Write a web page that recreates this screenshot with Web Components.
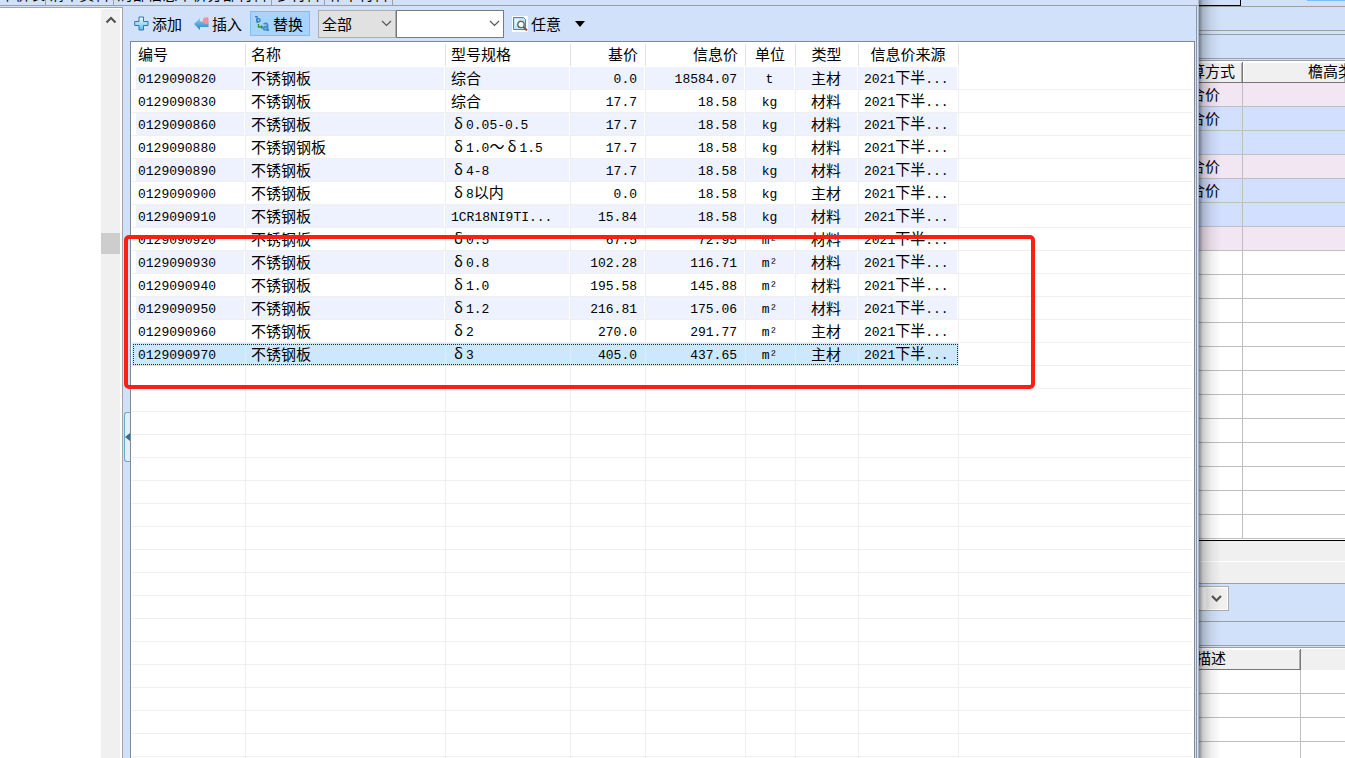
<!DOCTYPE html>
<html lang="zh-CN">
<head>
<meta charset="utf-8">
<title>人材机查询</title>
<style>
html,body{margin:0;height:100%;overflow:hidden}
body{font:15px/20px "Noto Sans CJK SC",sans-serif;color:#000;background:#d2e1fa}
</style>
</head>
<body>
<price-app></price-app>
<script>
const define=(name,html,init)=>{
  const t=document.createElement('template');
  t.innerHTML=html;
  customElements.define(name,class extends HTMLElement{
    constructor(){
      super();
      this.attachShadow({mode:'open'}).append(t.content.cloneNode(true));
      this.ready=false;
    }
    connectedCallback(){
      if(this.ready)return;
      this.ready=true;
      if(init)init(this,this.shadowRoot);
    }
  });
};

/* Half-width runs are set in the monospaced face, the rest in the CJK face. */
const runs=s=>s.replace(/([\x20-\x7e²]+)|(δ)/g,(m,a,w)=>w?`<span class="w">${w}</span>`:`<span class="n">${a}</span>`);

define('page-tabs',`
<style>
:host{display:flex;height:5px;overflow:hidden;border-bottom:1px solid #9c9fa5}
a{box-sizing:border-box;height:5px;border-right:1px solid #9c9fa5;color:inherit;text-decoration:none;white-space:nowrap;overflow:hidden;display:flex;align-items:flex-end;justify-content:center;line-height:22px}
a:nth-of-type(1){width:46px}a:nth-of-type(2){width:68px}a:nth-of-type(3){width:158px}a:nth-of-type(4){width:53px}a:nth-of-type(5){width:68px}
</style>
<a href="#">单价表</a><a href="#">清单资料</a><a href="#">局部信息单价分部材料</a><a href="#">参材料</a><a href="#">补中材料</a>`);

define('tree-panel',`
<style>
:host{box-sizing:border-box;display:flex;justify-content:flex-end;flex:0 0 123px;margin-top:1px;background:#fff;border:solid #a0a3a8;border-width:1px 1px 0 0;padding-right:2px}
.bar{width:19px;background:#f0f0f0;display:flex;flex-direction:column;align-items:center;margin-top:1px}
svg{margin-top:7px;flex:none}
.thumb{width:19px;height:21px;background:#cdcdcd;margin-top:209px}
</style>
<div class="bar"><svg width="12" height="8" viewBox="0 0 12 8"><path d="M1.5 6.5 6 2l4.500 4.500" fill="none" stroke="#505050" stroke-width="2"/></svg><div class="thumb"></div></div>`);

define('panel-splitter',`
<style>
:host{display:flex;flex:0 0 7px;justify-content:flex-end;align-items:flex-start}
button{box-sizing:border-box;width:6px;height:50px;margin-top:406px;padding:0;border:1px solid #6ea6c8;border-right:0;border-radius:3px 0 0 3px;background:#e0effa;display:flex;align-items:center;justify-content:flex-end}
</style>
<button aria-label="收起"><svg width="5" height="8" viewBox="0 0 5 8"><path d="M5 0v8L0 4z" fill="#39718f"/></svg></button>`);

define('tool-button',`
<style>
:host{display:block}
button{box-sizing:border-box;display:flex;align-items:center;gap:3px;height:25px;padding:0 3px;border:1px solid transparent;background:none;font:inherit;color:inherit;white-space:nowrap}
:host([active]) button{background:#a8d3fd;border-color:#7fbdf5;padding:0 6px 0 4px}
</style>
<button><slot name="icon"></slot><slot></slot><slot name="end"></slot></button>`);

define('drop-box',`
<style>
:host{display:grid;height:28px}
select,svg{grid-area:1/1}
select{box-sizing:border-box;width:100%;height:28px;margin:0;padding:0 20px 0 3px;appearance:none;border:1px solid #acacac;border-radius:0;background:#e1e1e1;font:inherit;color:inherit}
:host([plain]) select{background:#fff;border-color:#7a7a7a}
svg{justify-self:end;align-self:center;margin-right:4px;pointer-events:none}
</style>
<select><option></option></select><svg width="11" height="7" viewBox="0 0 11 7"><path d="M1 1l4.500 4.500L10 1" fill="none" stroke="#555" stroke-width="1.200"/></svg>`,
(el,r)=>{const s=r.querySelector('select');s.setAttribute('aria-label',el.getAttribute('label'));s.options[0].textContent=el.getAttribute('value')||''});

define('tool-bar',`
<style>
:host{display:flex;align-items:center;height:35px}
.all{width:78px;margin-left:8px}.find{width:108px;margin-right:4px}
.ins{margin:0 4px}
svg{display:block;flex:none}
.end{margin-left:11px}
</style>
<tool-button><svg slot="icon" width="15" height="15" viewBox="0 0 15 15"><defs><linearGradient id="p" x2="0" y2="1"><stop stop-color="#f2fbff"/><stop offset="1" stop-color="#5dbdea"/></linearGradient></defs><path d="M5 1h4.500v4.500H14V9.500H9.500V14H5V9.500H.7V5.500H5z" fill="url(#p)" stroke="#2f78a8" stroke-linejoin="round"/></svg>添加</tool-button>
<tool-button class="ins"><svg slot="icon" width="15" height="15" viewBox="0 0 15 15"><defs><linearGradient id="q" x2="0" y2="1"><stop stop-color="#8fd0f5"/><stop offset="1" stop-color="#2b7fc4"/></linearGradient></defs><path d="M0 8l6-6v3.500h8.500v5.500H6v3z" fill="url(#q)"/><path d="M9 2.500q3-2 5.500-1V7L12 8.500 9 6z" fill="#f3929c"/></svg>插入</tool-button>
<tool-button active><svg slot="icon" width="15" height="17" viewBox="0 0 15 17"><g fill="none" stroke="#2d7fc2" stroke-width="1.300"><path d="M0 1.600h2V7h1"/><circle cx="3.500" cy="5.300" r="1.600"/></g><path d="M3.500 9v3h3" fill="none" stroke="#2f9638" stroke-width="1.400"/><path d="M6 9.800l2.500 2.200L6 14z" fill="#2f9638"/><path d="M8.500 9q3.500-1.500 4 .8V15h1.500M12.500 11.500q-4 0-4 2t4 .7" fill="none" stroke="#3b8cc9" stroke-width="1.800"/></svg>替换</tool-button>
<drop-box class="all" label="范围" value="全部"></drop-box><drop-box class="find" plain label="关键字"></drop-box>
<tool-button><svg slot="icon" width="16" height="16" viewBox="0 0 16 16"><path d="M0 0h16v16H0z" fill="#fff"/><path d="M1.500 1.500h10l2 2v10h-12z" fill="#c5e5f5" stroke="#4b86ab"/><path d="M3 3h4L3 11z" fill="#eef9ff"/><circle cx="9" cy="8.500" r="3.200" fill="#fff" stroke="#695e55" stroke-width="1.300"/><path d="M11.500 11l3.500 3.500" stroke="#7b5b40" stroke-width="2"/></svg>任意<svg slot="end" class="end" width="10" height="6" viewBox="0 0 10 6"><path d="M0 0h10L5 6z"/></svg></tool-button>`);

define('material-table',`
<style>
:host{display:block;flex:1;min-height:0;overflow:hidden;padding:0 2px 0 1px;border:solid #818896;border-width:1px 1px 0;background:repeating-linear-gradient(#fff 0 22px,#efefef 22px 23px) 0 25px no-repeat content-box,#fff}
.n{font:13px/20px "Liberation Mono",monospace}
.w{display:inline-block;width:15px;text-align:center;line-height:20px}
table{table-layout:fixed;width:827px;height:100%;border-collapse:separate;border-spacing:0}
th,td{box-sizing:border-box;padding:0 8px 0 5px;text-align:left;white-space:nowrap;overflow:hidden;line-height:20px}
th{height:25px;padding-bottom:2px;font-weight:400;background:linear-gradient(#e2e2e2,#e2e2e2) 100% 2px/1px 22px no-repeat #fff}
td{height:23px;border-right:1px solid #efefef;background-clip:padding-box;background-repeat:no-repeat}
th:first-child,td:first-child{padding-left:6px}
.r{text-align:right}.c{text-align:center;padding-left:1px;padding-right:3px}
td.cjk{padding-bottom:2px}
tr.odd td{background-image:linear-gradient(#eef2fe,#eef2fe);background-size:calc(100% - 1px) 22px}
tr.odd td:first-child{background-position:4px 0;background-size:calc(100% - 5px) 22px}
tr.sel td{background:#cce8ff;border-color:#dcecf8}
tr.sel{outline:1px dotted #402010;outline-offset:-2px}
tr.rest td{height:auto}
</style>
<table><colgroup><col style="width:114px"><col style="width:200px"><col style="width:125px"><col style="width:75px"><col style="width:100px"><col style="width:50px"><col style="width:63px"><col style="width:100px"></colgroup>
<thead><tr><th>编号</th><th>名称</th><th>型号规格</th><th class="r">基价</th><th class="r">信息价</th><th class="c">单位</th><th class="c">类型</th><th class="c">信息价来源</th></tr></thead><tbody></tbody></table>`,
(el,r)=>{
  const data=[['820','不锈钢板','综合','0.0','18584.07','t','主材'],['830','不锈钢板','综合','17.7','18.58','kg','材料'],['860','不锈钢板','δ0.05-0.5','17.7','18.58','kg','材料'],['880','不锈钢钢板','δ1.0～δ1.5','17.7','18.58','kg','材料'],['890','不锈钢板','δ4-8','17.7','18.58','kg','材料'],['900','不锈钢板','δ8以内','0.0','18.58','kg','主材'],['910','不锈钢板','1CR18NI9TI...','15.84','18.58','kg','材料'],['920','不锈钢板','δ0.5','67.5','72.95','m²','材料'],['930','不锈钢板','δ0.8','102.28','116.71','m²','材料'],['940','不锈钢板','δ1.0','195.58','145.88','m²','材料'],['950','不锈钢板','δ1.2','216.81','175.06','m²','材料'],['960','不锈钢板','δ2','270.0','291.77','m²','主材'],['970','不锈钢板','δ3','405.0','437.65','m²','主材']];
  const cls=['','','','r','r','c','c',''];
  r.querySelector('tbody').innerHTML=data.map((d,i)=>{
    const cells=['0129090'+d[0],...d.slice(1),'2021下半...'];
    return `<tr class="${i===12?'sel':i%2?'':'odd'}">${cells.map((c,k)=>`<td class="${cls[k]}${/^[\u4e00-\u9fff]+$/.test(c)?' cjk':''}">${runs(c)}</td>`).join('')}</tr>`;
  }).join('')+`<tr class="rest">${'<td></td>'.repeat(8)}</tr>`;
});

define('front-window',`
<style>
:host{display:flex;flex-direction:column;min-width:0;height:100%;background:#d2e1fa;box-sizing:border-box;position:relative;border-right:1px solid #a9b7cd}
.body{display:flex;flex:1;min-height:0}
main{flex:1;min-width:0;display:flex;flex-direction:column}
.edge{flex:none;width:1px;margin:0 1px;background:#8e96a3}
.mark{position:absolute;left:124px;top:235px;width:911px;height:154px;box-sizing:border-box;border:4px solid #ff1e14;border-radius:5px;pointer-events:none}
</style>
<page-tabs></page-tabs>
<div class="body"><tree-panel></tree-panel><panel-splitter></panel-splitter><main><tool-bar></tool-bar><material-table></material-table></main><div class="edge"></div></div>
<div class="mark"></div>`);

define('data-grid',`
<style>
:host{display:block;overflow:hidden;background:#fff}
table{table-layout:fixed;width:calc(100% + 9px);margin-left:-9px;border-collapse:separate;border-spacing:0}
th,td{box-sizing:border-box;padding:0 0 2px;text-align:left;font-weight:400;white-space:nowrap;overflow:hidden;line-height:20px}
th{height:21px;line-height:18px;background:#f0f0f0;border:solid #777;border-width:0 1px 1px 0;box-shadow:inset 1px 1px #fff,inset -1px 0 #b0b0b0}
td{height:24px;border:solid #bfbfbf;border-width:0 1px 1px 0}
td:last-child,th:last-child{border-right:0}
.pink td{background:#f2e6f2}.blue td{background:#d3dfff}
.far{padding-left:65px}
.desc{padding-left:6px}
.blank{border-color:#f0f0f0;box-shadow:none}
</style>
<table><thead></thead><tbody></tbody></table>`,
(el,r)=>{
  const lower=el.hasAttribute('lower');
  const w=lower?111:53;
  r.querySelector('thead').innerHTML=lower?`<tr><th class="desc" style="width:${w}px">描述</th><th class="blank"></th></tr>`:`<tr><th style="width:${w}px">算方式</th><th class="far">檐高类型</th></tr>`;
  const top=[['pink','合价'],['blue','合价'],['blue',''],['pink','合价'],['blue','合价'],['blue',''],['pink','']];
  r.querySelector('tbody').innerHTML=Array.from({length:lower?6:19},(_,i)=>{
    const [c,t]=(!lower&&top[i])||['',''];
    return `<tr class="${c}"><td>${t}</td><td></td></tr>`;
  }).join('');
});

define('back-window',`
<style>
:host{display:grid;height:100%;overflow:hidden;background:#d2e1fa}
.col,.shade{grid-area:1/1;min-width:0}
.col{display:flex;flex-direction:column;min-height:0}
.col>*{flex:none;box-sizing:border-box}
.shade{pointer-events:none;width:22px;background:linear-gradient(90deg,#0007,#0003 4px,#0001 12px,#0000)}
.top{height:7px;border-bottom:1px solid #a0a0a0;display:flex;justify-content:space-between}
.box{box-sizing:border-box;width:42px;height:6px;border:solid #000;border-width:0 1px 1px 0}
.tab{width:38px;height:1px;background:#7fbcf7}
.a{height:24px;border-bottom:1px solid #a0a0a0}
.b{height:4px;border-bottom:1px solid #a0a0a0}
.c{height:26px;border-bottom:3px double #9a9ea6}
.grid{border-top:1px solid #fff;border-bottom:1px solid #000;height:480px}
.g1{height:21px;background:#f0f0f0;border-bottom:1px solid #fff}
.g2{height:22px;background:#f0f0f0;border-bottom:1px solid #a0a0a0}
.d{height:38px;border-bottom:1px solid #9a9ea6;padding-top:2px}
.e{height:26px;border-bottom:3px double #9a9ea6}
.pick{display:flex;align-items:center;justify-content:flex-end;box-sizing:border-box;width:30px;height:25px;margin:0;padding:1px;border:1px solid #acacac;border-left:0;background:#fff}
.pick span{display:flex;align-items:center;justify-content:center;width:21px;height:21px;background:#f0f0f0}
.low{border-top:1px solid #fff}
.col>.low{flex:1}
</style>
<div class="col"><div class="top"><div class="box"></div><div class="tab"></div></div><div class="a"></div><div class="b"></div><div class="c"></div>
<data-grid class="grid"></data-grid><div class="g1"></div><div class="g2"></div>
<div class="d"><button class="pick" aria-label="选择"><span><svg width="11" height="8" viewBox="0 0 11 8"><path d="M1 1l4.500 4.500L10 1" fill="none" stroke="#555" stroke-width="2.200"/></svg></span></button></div>
<div class="e"></div><data-grid class="low" lower></data-grid></div><div class="shade"></div>`);

define('price-app',`
<style>:host{display:grid;grid-template-columns:minmax(0,1fr) 146px;grid-template-rows:100%;height:100vh;overflow:hidden}</style>
<front-window></front-window><back-window></back-window>`);
</script>
</body>
</html>
